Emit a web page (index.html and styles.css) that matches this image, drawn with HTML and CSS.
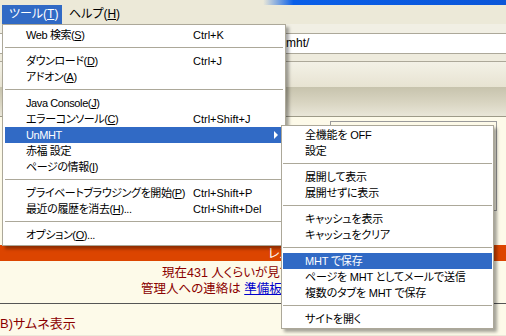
FILE: index.html
```html
<!DOCTYPE html>
<html lang="ja">
<head>
    <meta charset="UTF-8">
    <title>UnMHT - ツールメニュー</title>
    <link rel="stylesheet" href="styles.css">
</head>
<body>
    <div class="window">
        <div class="titlebar"></div>
        <div class="menubar">
            <span class="menubar-item active">ツール(<u>T</u>)</span>
            <span class="menubar-item">ヘルプ(<u>H</u>)</span>
        </div>
        <div class="nav-strip"></div>
        <div class="urlbar"><span class="url">mht/</span></div>
        <div class="nav-strip lower"></div>
        <div class="toolbar"></div>
        <div class="tabbar"></div>

        <div class="page">
            <div class="page-top">
                <div class="side-box"></div>
            </div>
            <div class="res-band"><span>レス</span></div>
            <div class="info">
                <p class="info-now">現在431 人くらいが見ています</p>
                <p class="info-admin">管理人への連絡は <a href="#">準備板</a></p>
            </div>
            <div class="thumb-row">B)サムネ表示</div>
        </div>
    </div>

    <!-- Tools menu -->
    <div class="menu main-menu">
        <div class="menu-item"><span class="label">Web 検索(<u>S</u>)</span><span>Ctrl+K</span></div>
        <div class="menu-sep"></div>
        <div class="menu-item"><span class="label">ダウンロード(<u>D</u>)</span><span>Ctrl+J</span></div>
        <div class="menu-item"><span class="label">アドオン(<u>A</u>)</span><span></span></div>
        <div class="menu-sep"></div>
        <div class="menu-item"><span class="label">Java Console(<u>J</u>)</span><span></span></div>
        <div class="menu-item"><span class="label">エラーコンソール(<u>C</u>)</span><span>Ctrl+Shift+J</span></div>
        <div class="menu-item selected has-sub"><span class="label">UnMHT</span><span></span></div>
        <div class="menu-item"><span class="label">赤福 設定</span><span></span></div>
        <div class="menu-item"><span class="label">ページの情報(<u>I</u>)</span><span></span></div>
        <div class="menu-sep"></div>
        <div class="menu-item"><span class="label">プライベートブラウジングを開始(<u>P</u>)</span><span>Ctrl+Shift+P</span></div>
        <div class="menu-item"><span class="label">最近の履歴を消去(<u>H</u>)...</span><span>Ctrl+Shift+Del</span></div>
        <div class="menu-sep"></div>
        <div class="menu-item"><span class="label">オプション(<u>O</u>)...</span><span></span></div>
    </div>

    <!-- UnMHT submenu -->
    <div class="menu sub-menu">
        <div class="menu-item">全機能を OFF</div>
        <div class="menu-item">設定</div>
        <div class="menu-sep"></div>
        <div class="menu-item">展開して表示</div>
        <div class="menu-item">展開せずに表示</div>
        <div class="menu-sep"></div>
        <div class="menu-item">キャッシュを表示</div>
        <div class="menu-item">キャッシュをクリア</div>
        <div class="menu-sep"></div>
        <div class="menu-item selected">MHT で保存</div>
        <div class="menu-item">ページを MHT としてメールで送信</div>
        <div class="menu-item">複数のタブを MHT で保存</div>
        <div class="menu-sep"></div>
        <div class="menu-item">サイトを開く</div>
    </div>
</body>
</html>
```

FILE: styles.css
```css
body {
    margin: 0;
    font-family: "Liberation Sans", "Noto Sans CJK JP", sans-serif;
    font-size: 12px;
    font-feature-settings: "palt";
    background-color: #ece9d8;
    overflow: hidden;
}
.window {
    width: 506px;
    height: 336px;
}
.titlebar {
    height: 5px;
    background: linear-gradient(to right, #ece9d8 0, #ece9d8 52%, #0a5fe8 58%, #0b56d8 100%);
}
.menubar {
    height: 19px;
    display: flex;
    padding-left: 2px;
    background-color: #ece9d8;
}
.menubar-item {
    line-height: 19px;
    padding: 0 6px 0 7px;
    color: #000;
    white-space: nowrap;
}
.menubar-item.active {
    width: 60px;
    box-sizing: border-box;
    background-color: #316ac5;
    color: #fff;
}
.nav-strip {
    height: 9px;
    background-color: #f1efe4;
    border-bottom: 1px solid #aca899;
}
.nav-strip.lower {
    height: 7px;
    background-color: #eeebdd;
}
.urlbar {
    height: 19px;
    background-color: #fff;
    border-bottom: 1px solid #aca899;
    padding-left: 286px;
    line-height: 19px;
}
.toolbar {
    height: 25px;
    background: linear-gradient(#f3f1e6, #e7e3d2);
}
.tabbar {
    height: 29px;
    background: linear-gradient(#c7c3ad, #d9d5c2 55%, #e9e6d8);
    border-bottom: 1px solid #9d9a88;
}
.page {
    height: 218px;
    background-color: #fdfae9;
    color: #8b0000;
    font-size: 12.5px;
}
.page-top {
    height: 128px;
    padding-top: 4px;
    box-sizing: border-box;
}
.side-box {
    margin-left: 330px;
    width: 165px;
    height: 88px;
    border: 1px solid #9a9a9a;
}
.res-band {
    height: 16px;
    background-color: #dc4500;
    color: #fff;
    padding-left: 268px;
    line-height: 16px;
    font-size: 13px;
}
.info {
    padding: 4px 0 6px;
    border-bottom: 1px solid #555;
}
.info p {
    margin: 0;
    line-height: 16px;
}
.info-now {
    padding-left: 162px;
}
.info-admin {
    padding-left: 141px;
}
.info a {
    color: #0000cc;
}
.thumb-row {
    padding-top: 12px;
    line-height: 16px;
    font-size: 13px;
}

/* popup menus */
.menu {
    position: absolute;
    background-color: #fff;
    border: 1px solid #aca899;
    box-shadow: 3px 3px 3px rgba(0, 0, 0, 0.35);
    color: #000;
    font-size: 11px;
}
.main-menu {
    left: 2px;
    top: 24px;
    width: 278px;
    padding: 2px;
}
.sub-menu {
    left: 281px;
    top: 125px;
    width: 209px;
    padding: 1px;
}
.menu-item {
    position: relative;
    height: 16px;
    line-height: 16px;
    padding-left: 21px;
    white-space: nowrap;
}
.main-menu .menu-item {
    display: grid;
    grid-template-columns: 167px 1fr;
}
.main-menu .label {
    letter-spacing: -0.4px;
}
.sub-menu .menu-item {
    padding-left: 22px;
    letter-spacing: -0.2px;
}
.menu-item.selected {
    background-color: #316ac5;
    color: #fff;
}
.has-sub::after {
    content: "";
    position: absolute;
    right: 5px;
    top: 4px;
    border-left: 4px solid #fff;
    border-top: 4px solid transparent;
    border-bottom: 4px solid transparent;
}
.menu-sep {
    height: 10px;
    position: relative;
}
.menu-sep::before {
    content: "";
    position: absolute;
    left: 0;
    right: 0;
    top: 4px;
    border-top: 1px solid #aca899;
}
```
